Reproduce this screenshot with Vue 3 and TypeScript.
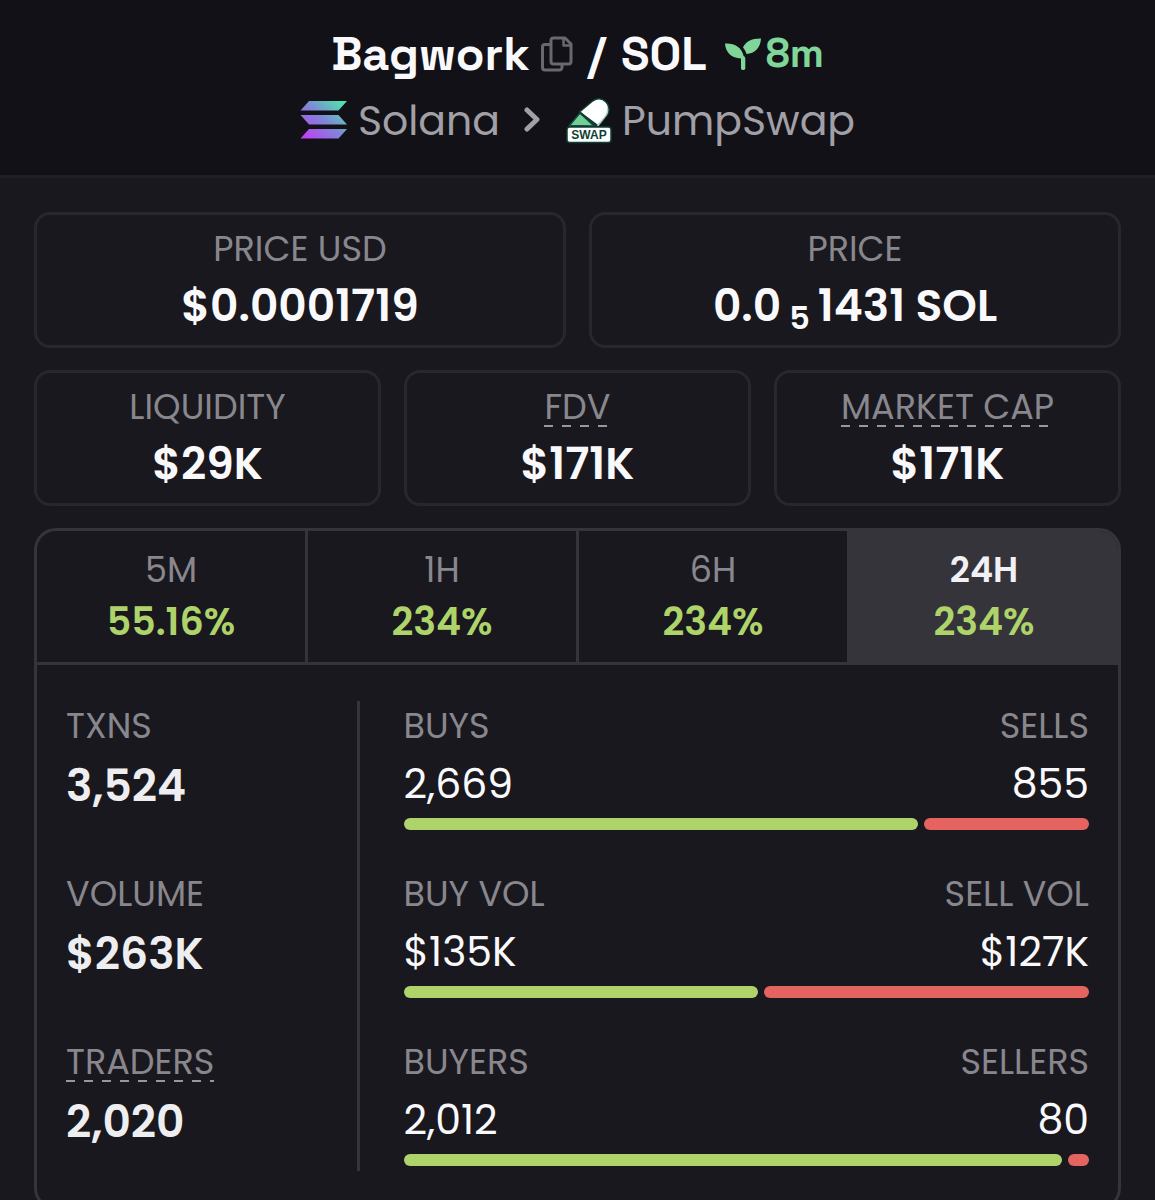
<script setup lang="ts">
import { ref } from 'vue'

interface Stat {
  label: string
  value: string
  hint?: boolean
}

interface Period {
  label: string
  change: string
}

interface Activity {
  total: Stat
  buy: Stat
  sell: Stat
  buyShare: number
}

const capStats: Stat[] = [
  { label: 'LIQUIDITY', value: '$29K' },
  { label: 'FDV', value: '$171K', hint: true },
  { label: 'MARKET CAP', value: '$171K', hint: true },
]

const periods: Period[] = [
  { label: '5M', change: '55.16%' },
  { label: '1H', change: '234%' },
  { label: '6H', change: '234%' },
  { label: '24H', change: '234%' },
]

const activePeriod = ref('24H')

const activity: Activity[] = [
  {
    total: { label: 'TXNS', value: '3,524' },
    buy: { label: 'BUYS', value: '2,669' },
    sell: { label: 'SELLS', value: '855' },
    buyShare: 75.7,
  },
  {
    total: { label: 'VOLUME', value: '$263K' },
    buy: { label: 'BUY VOL', value: '$135K' },
    sell: { label: 'SELL VOL', value: '$127K' },
    buyShare: 52.1,
  },
  {
    total: { label: 'TRADERS', value: '2,020', hint: true },
    buy: { label: 'BUYERS', value: '2,012' },
    sell: { label: 'SELLERS', value: '80' },
    buyShare: 96.9,
  },
]
</script>

<template>
  <div class="page">
    <header class="header">
      <h1 class="pair">
        <span>Bagwork</span>
        <button class="copy" type="button" aria-label="Copy token address">
          <svg width="32" height="36" viewBox="0 0 32 36" fill="none" stroke="currentColor" stroke-width="3" stroke-linejoin="round">
            <path d="M9.500 8.500H4a2.500 2.500 0 0 0-2.500 2.500v20.500A2.500 2.500 0 0 0 4 34h14.500a2.500 2.500 0 0 0 2.500-2.500V28" />
            <path d="M12.500 2H24l6 6v17.500a2.500 2.500 0 0 1-2.500 2.500h-15a2.500 2.500 0 0 1-2.500-2.500v-21A2.500 2.500 0 0 1 12.500 2z" />
            <path d="M22.500 2.500v7H30" stroke-width="2.500" />
          </svg>
        </button>
        <span class="slash">/</span>
        <span>SOL</span>
        <span class="age">
          <svg width="36" height="32" viewBox="0 0 36 32" fill="currentColor" aria-hidden="true">
            <path d="M0 5.500c9.500-.5 17 4 18.600 12.500C20 18.500 20.300 19.500 20.300 21v9.500a1.600 1.600 0 0 1-1.600 1.500h-1.200a1.600 1.600 0 0 1-1.500-1.500V20.500C6.500 20 .5 14.500 0 5.500z" />
            <path d="M36 .5C35.500 9.500 30 15.500 21.500 16c-.7-2.600-1.900-4.700-3.500-6.500C20.500 3.500 27 .3 36 .5z" />
          </svg>
          <span>8m</span>
        </span>
      </h1>
      <nav class="route" aria-label="Market">
        <a class="crumb" href="#solana">
          <svg width="48" height="40" viewBox="0 0 48 40" aria-hidden="true">
            <defs>
              <linearGradient id="chain" gradientUnits="userSpaceOnUse" x1="6" y1="38" x2="40" y2="0">
                <stop offset="0" stop-color="#c040f5" />
                <stop offset="0.5" stop-color="#8184d8" />
                <stop offset="1" stop-color="#52e0ac" />
              </linearGradient>
            </defs>
            <path fill="url(#chain)" d="M9 0h38l-8.500 9.500H.5zM.5 14h38l8.500 9.500H9zM9 28h38l-8.500 9.500H.5z" />
          </svg>
          <span>Solana</span>
        </a>
        <svg class="chevron" width="18" height="28" viewBox="0 0 18 28" fill="none" stroke="currentColor" stroke-width="5" stroke-linecap="round" stroke-linejoin="round" aria-hidden="true">
          <path d="M3 3L13 12.500L3 22" />
        </svg>
        <a class="crumb" href="#pumpswap">
          <svg width="46" height="48" viewBox="0 0 46 48" aria-hidden="true">
            <path d="M13.500 15L26 4.500c4.500-4 10-3.500 14 .5s4 10 .5 14L32.500 29z" fill="#fff" stroke="#123f35" stroke-width="1.500" />
            <path d="M30.500 28.500L38 20c3-3.500 3.500-7 2.500-11.500c2.500 3.500 2.500 7.500-.5 11L32.500 29z" fill="#b9cdc6" />
            <path d="M3.500 28.500L14 16l14 13z" fill="#72cf96" stroke="#164c3c" stroke-width="1.500" />
            <path d="M14 15.500L30 29" stroke="#123f35" stroke-width="2" />
            <rect x="1" y="30" width="44" height="15.500" rx="2.500" fill="#fff" stroke="#123f35" stroke-width="1.500" />
            <text x="23" y="42" text-anchor="middle" class="badge-text">SWAP</text>
          </svg>
          <span>PumpSwap</span>
        </a>
      </nav>
    </header>

    <main class="content">
      <section class="cards" aria-label="Price">
        <div class="card">
          <span class="label">PRICE USD</span>
          <strong class="value">$0.0001719</strong>
        </div>
        <div class="card">
          <span class="label">PRICE</span>
          <strong class="value price">
            <span>0.0</span><sub>5</sub><span>1431 SOL</span>
          </strong>
        </div>
      </section>

      <section class="cards" aria-label="Market size">
        <div v-for="stat in capStats" :key="stat.label" class="card">
          <span class="label" :class="{ hint: stat.hint }">{{ stat.label }}</span>
          <strong class="value">{{ stat.value }}</strong>
        </div>
      </section>

      <section class="panel" aria-label="Activity">
        <div class="tabs">
          <button
            v-for="period in periods"
            :key="period.label"
            type="button"
            class="tab"
            :class="{ active: period.label === activePeriod }"
            :aria-pressed="period.label === activePeriod"
            @click="activePeriod = period.label"
          >
            <span class="tab-label">{{ period.label }}</span>
            <span class="change">{{ period.change }}</span>
          </button>
        </div>

        <div class="stats">
          <div class="totals">
            <div v-for="row in activity" :key="row.total.label" class="row">
              <span class="label" :class="{ hint: row.total.hint }">{{ row.total.label }}</span>
              <strong class="total">{{ row.total.value }}</strong>
            </div>
          </div>
          <div class="splits">
            <div v-for="row in activity" :key="row.buy.label" class="row">
              <div class="ends">
                <span class="label">{{ row.buy.label }}</span>
                <span class="label">{{ row.sell.label }}</span>
              </div>
              <div class="ends amount">
                <span>{{ row.buy.value }}</span>
                <span>{{ row.sell.value }}</span>
              </div>
              <div class="bar">
                <span class="buy" :style="{ flexGrow: row.buyShare }"></span>
                <span class="sell" :style="{ flexGrow: 100 - row.buyShare }"></span>
              </div>
            </div>
          </div>
        </div>
      </section>
    </main>
  </div>
</template>

<style>
body {
  margin: 0;
  background: #19181e;
}
</style>

<style scoped>
.page {
  box-sizing: border-box;
  height: 100vh;
  overflow: hidden;
  background: #19181e;
  color: #f9f9fb;
  font-family: Poppins, Inter, 'Liberation Sans', sans-serif;
}

button {
  margin: 0;
  padding: 0;
  border: 0;
  background: none;
  color: inherit;
  font: inherit;
  cursor: pointer;
}

svg {
  display: block;
  flex: none;
}

.header {
  display: flex;
  flex-direction: column;
  align-items: center;
  gap: 8px;
  padding: 24px 32px 25px;
  border-bottom: 3px solid #202026;
  background: #121117;
}

.pair {
  display: flex;
  align-items: center;
  margin: 0;
  font-family: 'Space Grotesk', Inter, 'Liberation Sans', sans-serif;
  font-size: 47px;
  line-height: 60px;
  font-weight: 600;
}

.copy {
  margin-left: 11px;
  color: #69686e;
}

.slash {
  margin: 0 15px;
}

.age {
  display: flex;
  align-items: center;
  gap: 5px;
  margin-left: 18px;
  color: #80d698;
  font-size: 40px;
}

.route {
  display: flex;
  align-items: center;
  gap: 24px;
  font-size: 41px;
  line-height: 58px;
}

.crumb {
  display: flex;
  align-items: center;
  gap: 10px;
  color: #a1a0a6;
  text-decoration: none;
}

.chevron {
  color: #a1a0a6;
}

.badge-text {
  fill: #123f35;
  font-family: 'Liberation Sans', sans-serif;
  font-size: 12px;
  font-weight: 700;
}

.content {
  display: flex;
  flex-direction: column;
  gap: 22px;
  padding: 34px;
}

.cards {
  display: flex;
  gap: 23px;
}

.card {
  display: flex;
  flex: 1 1 0;
  flex-direction: column;
  align-items: center;
  padding: 9px 0 7px;
  border: 3px solid #27272c;
  border-radius: 16px;
}

.label {
  color: #88878d;
  font-size: 35px;
  line-height: 50px;
}

.hint {
  background: repeating-linear-gradient(90deg, #98979d 0 9px, transparent 9px 18px) left 0 bottom 5px / 100% 2px no-repeat;
}

.value {
  font-size: 44px;
  line-height: 64px;
  font-weight: 600;
}

.price {
  display: flex;
}

.price sub {
  align-self: flex-end;
  margin: 0 8px;
  font-size: 32px;
  line-height: 40px;
  vertical-align: baseline;
}

.panel {
  overflow: hidden;
  flex: none;
  border: 3px solid #35343a;
  border-radius: 22px;
}

.tabs {
  display: flex;
  border-bottom: 3px solid #35343a;
}

.tab {
  display: flex;
  flex: 1 1 0;
  flex-direction: column;
  align-items: center;
  padding: 13px 0 14px;
  border-right: 3px solid #35343a;
}

.tab:last-child {
  border-right: 0;
}

.tab.active {
  background: #35343a;
}

.tab-label {
  color: #88878d;
  font-size: 35px;
  line-height: 52px;
}

.active .tab-label {
  color: #f1f1f5;
  font-weight: 600;
}

.change {
  color: #aed36a;
  font-size: 38px;
  line-height: 52px;
  font-weight: 600;
}

.stats {
  display: flex;
  padding: 36px 29px;
}

.totals,
.splits {
  display: flex;
  flex-direction: column;
  gap: 34px;
}

.totals {
  flex: 0 0 28.4%;
}

.splits {
  flex: 1;
  padding-left: 44px;
  border-left: 3px solid #35343a;
}

.row {
  display: flex;
  flex-direction: column;
  align-items: flex-start;
  height: 134px;
}

.total {
  color: #eeeef0;
  font-size: 44px;
  line-height: 70px;
  font-weight: 600;
}

.ends {
  display: flex;
  justify-content: space-between;
  align-self: stretch;
}

.amount {
  font-size: 41px;
  line-height: 65px;
}

.bar {
  display: flex;
  align-self: stretch;
  gap: 6px;
  height: 12px;
  margin-top: 2px;
}

.bar span {
  flex: 1 1 0;
  border-radius: 6px;
}

.buy {
  background: #aed36a;
}

.sell {
  background: #e5645f;
}
</style>
